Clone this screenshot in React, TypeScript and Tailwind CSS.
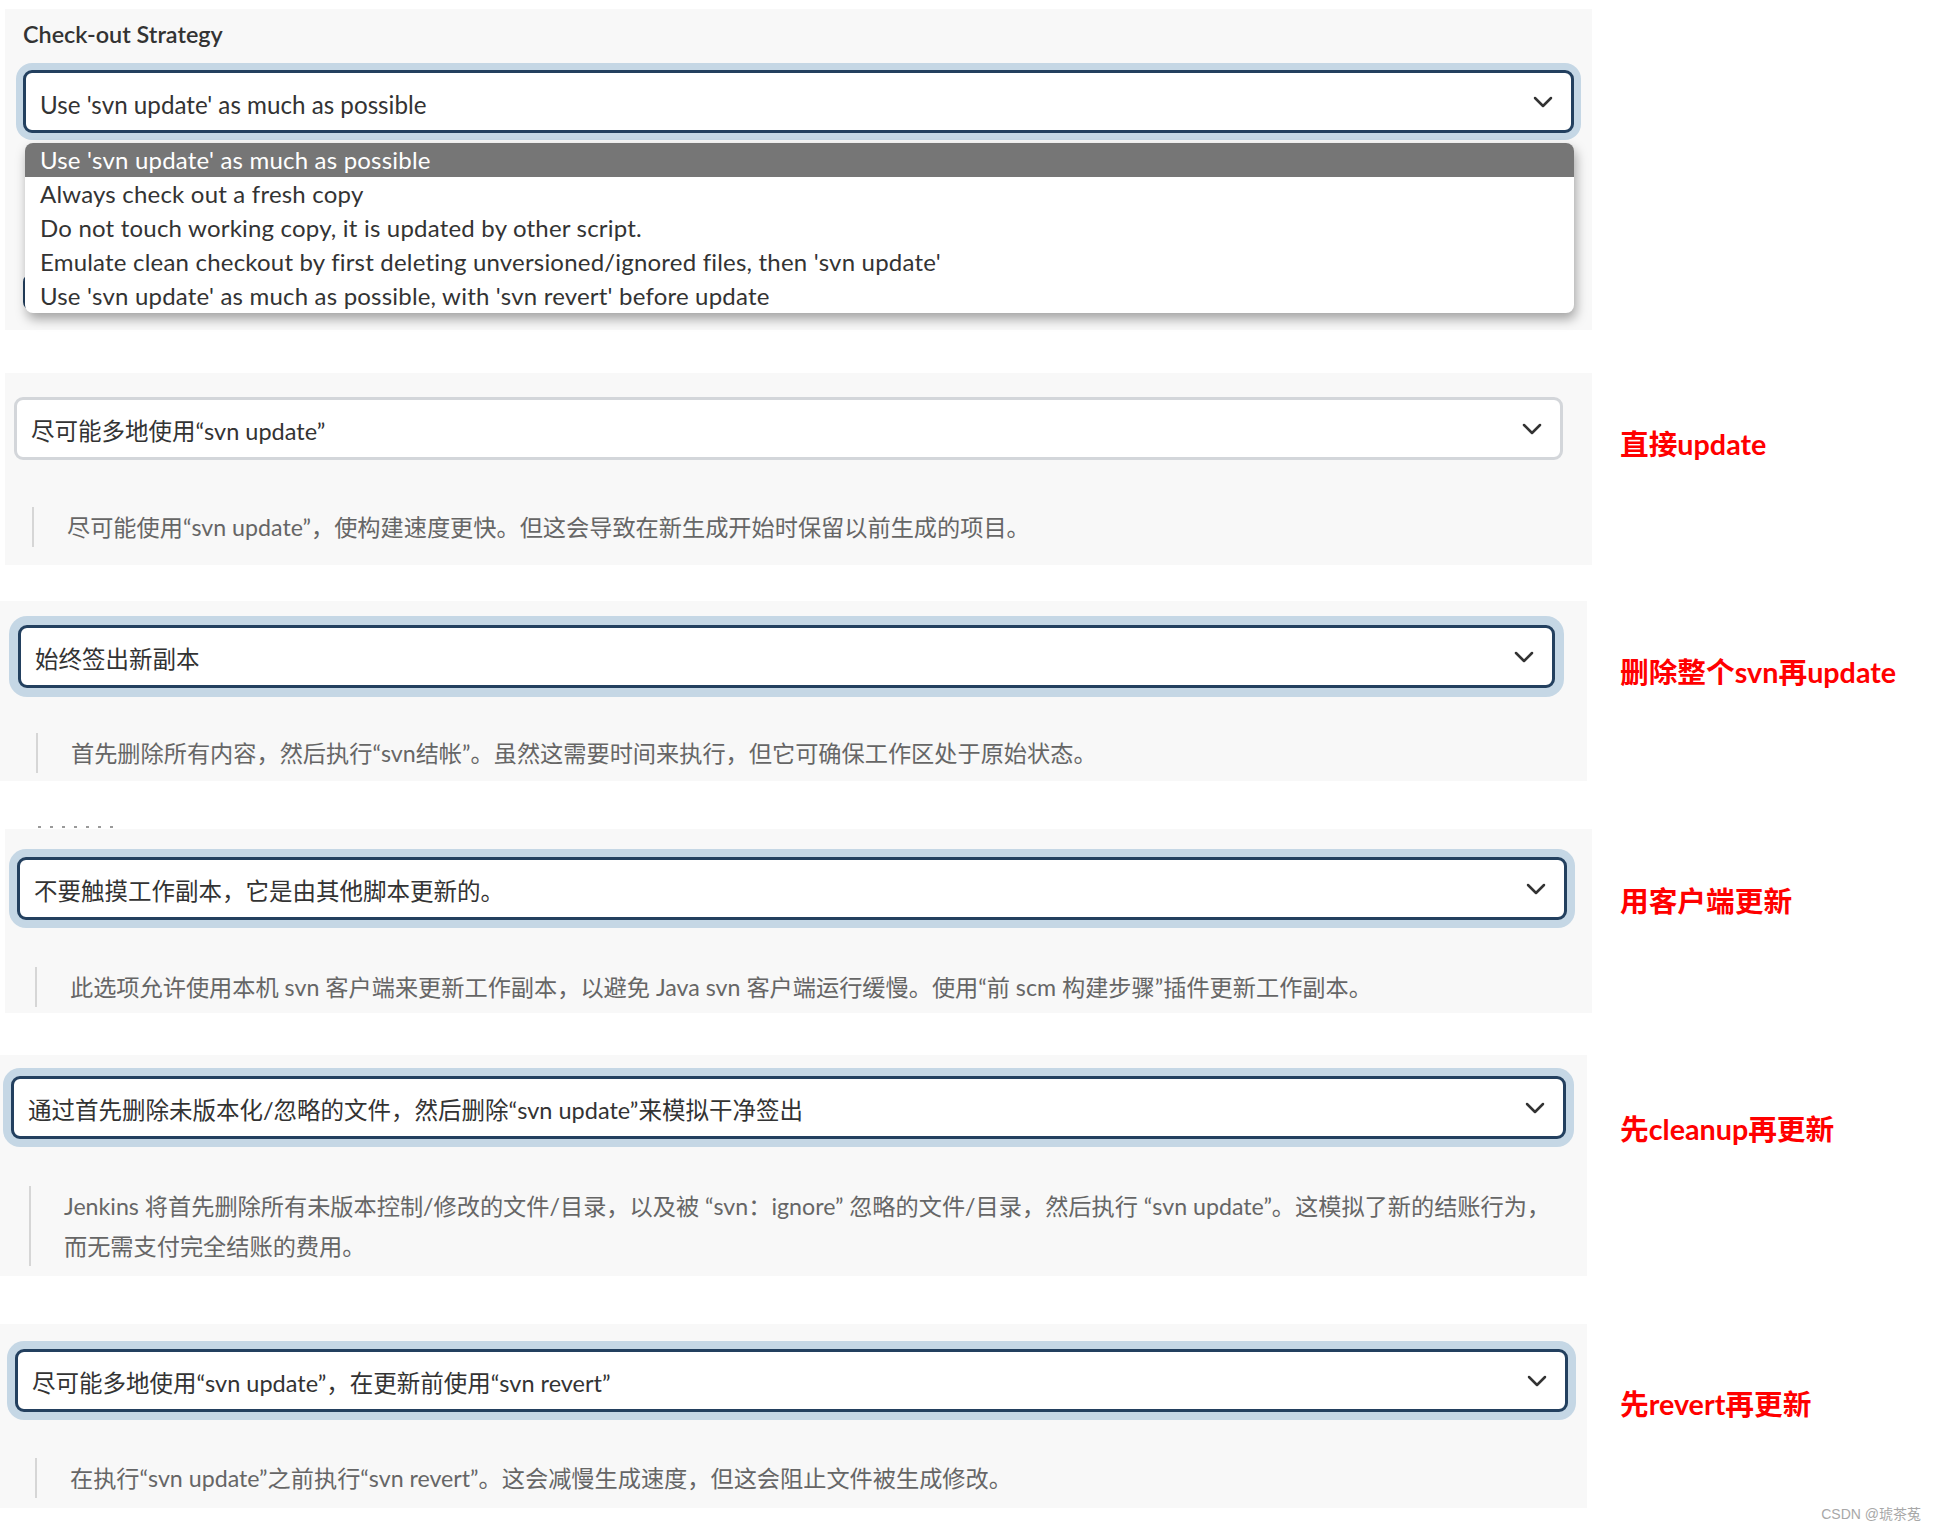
import React from "react";

function Chevron() {
  return (
    <svg width="20" height="12" viewBox="0 0 20 12" fill="none" className="shrink-0">
      <path d="M2 2l8 8 8-8" stroke="#333" strokeWidth="2.5" strokeLinecap="round" strokeLinejoin="round" />
    </svg>
  );
}

function Select({
  text,
  focused,
  className,
  textClass = "text-[23.5px]",
}: {
  text: string;
  focused: boolean;
  className: string;
  textClass?: string;
}) {
  return (
    <div
      className={
        "flex h-[63px] items-center justify-between rounded-[9px] border-[3px] bg-white pl-[14px] pr-[18px] " +
        (focused ? "border-[#23405f] " : "border-[#d3d6da] ") +
        className
      }
    >
      <span className={"whitespace-nowrap pt-[7px] text-[#333] " + textClass}>{text}</span>
      <Chevron />
    </div>
  );
}

function Desc({ children, className }: { children: React.ReactNode; className: string }) {
  return (
    <div className={"border-l-2 border-[#d6d6d6] pl-[33px] text-[23.2px] leading-[40px] text-[#666] " + className}>
      {children}
    </div>
  );
}

function Label({ text, className }: { text: string; className: string }) {
  return (
    <div className={"whitespace-nowrap text-[28.7px] font-bold leading-[36px] text-[#ff0000] " + className}>{text}</div>
  );
}

const options = [
  "Use 'svn update' as much as possible",
  "Always check out a fresh copy",
  "Do not touch working copy, it is updated by other script.",
  "Emulate clean checkout by first deleting unversioned/ignored files, then 'svn update'",
  "Use 'svn update' as much as possible, with 'svn revert' before update",
];

export default function App() {
  return (
    <div className="min-h-[1528px] w-[1936px] bg-white pt-[9px] font-['Lato','Noto_Sans_CJK_SC',sans-serif]">
      {/* Row 1 */}
      <div className="flex">
        <div className="w-[1620px] shrink-0">
          <div className="ml-[5px] w-[1587px] bg-[#f8f8f8] pb-[20px] pt-[11px]">
            <div className="ml-[18px] text-[23.4px] font-semibold leading-[28px] text-[#333]">Check-out Strategy</div>
            <div className="relative mx-[18px] mt-[22px]">
              <Select
                focused
                text="Use 'svn update' as much as possible"
                className="shadow-[0_0_0_7px_#c5d7e5]"
                textClass="text-[24.2px]"
              />
              <div className="absolute left-[2px] right-0 top-[73px] z-10 overflow-hidden rounded-[8px] bg-white shadow-[2px_6px_12px_rgba(0,0,0,0.35)]">
                {options.map((o, i) => (
                  <div
                    key={o}
                    className={
                      "h-[34px] whitespace-nowrap pl-[15px] text-[24px] leading-[34px] tracking-[0.2px] " +
                      (i === 0 ? "bg-[#767676] text-white" : "text-[#333]")
                    }
                  >
                    {o}
                  </div>
                ))}
              </div>
            </div>
            <div className="mx-[18px] mt-[141px] h-[36px] rounded-[8px] border-[3px] border-[#23405f] bg-white" />
          </div>
        </div>
      </div>

      {/* Row 2 */}
      <div className="mt-[43px] flex items-start">
        <div className="w-[1620px] shrink-0">
          <div className="ml-[5px] w-[1587px] bg-[#f8f8f8] pb-[18px] pt-[24px]">
            <Select focused={false} text="尽可能多地使用“svn update”" className="ml-[9px] mr-[29px]" />
            <Desc className="ml-[27px] mt-[47px]">
              尽可能使用“svn update”，使构建速度更快。但这会导致在新生成开始时保留以前生成的项目。
            </Desc>
          </div>
        </div>
        <Label text="直接update" className="pt-[53px]" />
      </div>

      {/* Row 3 */}
      <div className="mt-[36px] flex items-start">
        <div className="w-[1620px] shrink-0">
          <div className="w-[1587px] bg-[#f8f8f8] pb-[8px] pt-[24px]">
            <Select focused text="始终签出新副本" className="ml-[18px] mr-[32px] shadow-[0_0_0_9px_#c5d7e5]" />
            <Desc className="ml-[36px] mt-[45px]">
              首先删除所有内容，然后执行“svn结帐”。虽然这需要时间来执行，但它可确保工作区处于原始状态。
            </Desc>
          </div>
        </div>
        <Label text="删除整个svn再update" className="pt-[53px]" />
      </div>

      {/* dots */}
      <div className="flex h-[48px] items-end gap-[9px] pb-[1px] pl-[38px]">
        {[0, 1, 2, 3, 4, 5, 6].map((i) => (
          <span key={i} className="h-[2px] w-[3px] bg-[#9a9a9a]" />
        ))}
      </div>

      {/* Row 4 */}
      <div className="flex items-start">
        <div className="w-[1620px] shrink-0">
          <div className="ml-[5px] w-[1587px] bg-[#f8f8f8] pb-[6px] pt-[28px]">
            <Select
              focused
              text="不要触摸工作副本，它是由其他脚本更新的。"
              className="ml-[12px] mr-[25px] shadow-[0_0_0_8px_#c5d7e5]"
            />
            <Desc className="ml-[30px] mt-[47px]">
              此选项允许使用本机 svn 客户端来更新工作副本，以避免 Java svn 客户端运行缓慢。使用“前 scm 构建步骤”插件更新工作副本。
            </Desc>
          </div>
        </div>
        <Label text="用客户端更新" className="pt-[54px]" />
      </div>

      {/* Row 5 */}
      <div className="mt-[42px] flex items-start">
        <div className="w-[1620px] shrink-0">
          <div className="w-[1587px] bg-[#f8f8f8] pb-[10px] pt-[21px]">
            <Select
              focused
              text="通过首先删除未版本化/忽略的文件，然后删除“svn update”来模拟干净签出"
              className="ml-[11px] mr-[21px] shadow-[0_0_0_8px_#c5d7e5]"
            />
            <Desc className="ml-[29px] mr-[20px] mt-[47px] whitespace-nowrap">
              Jenkins 将首先删除所有未版本控制/修改的文件/目录，以及被 “svn：ignore” 忽略的文件/目录，然后执行 “svn update”。这模拟了新的结账行为，
              <br />
              而无需支付完全结账的费用。
            </Desc>
          </div>
        </div>
        <Label text="先cleanup再更新" className="pt-[56px]" />
      </div>

      {/* Row 6 */}
      <div className="mt-[48px] flex items-start">
        <div className="w-[1620px] shrink-0">
          <div className="w-[1587px] bg-[#f8f8f8] pb-[10px] pt-[25px]">
            <Select
              focused
              text="尽可能多地使用“svn update”，在更新前使用“svn revert”"
              className="ml-[15px] mr-[19px] shadow-[0_0_0_8px_#c5d7e5]"
            />
            <Desc className="ml-[35px] mt-[46px]">
              在执行“svn update”之前执行“svn revert”。这会减慢生成速度，但这会阻止文件被生成修改。
            </Desc>
          </div>
        </div>
        <Label text="先revert再更新" className="pt-[62px]" />
      </div>

      <div className="-mt-[3px] flex justify-end pr-[15px] font-['Liberation_Sans','Noto_Sans_CJK_SC',sans-serif] text-[14px] leading-[18px] text-[#a8a8a8]">
        CSDN @琥茶菟
      </div>
    </div>
  );
}
